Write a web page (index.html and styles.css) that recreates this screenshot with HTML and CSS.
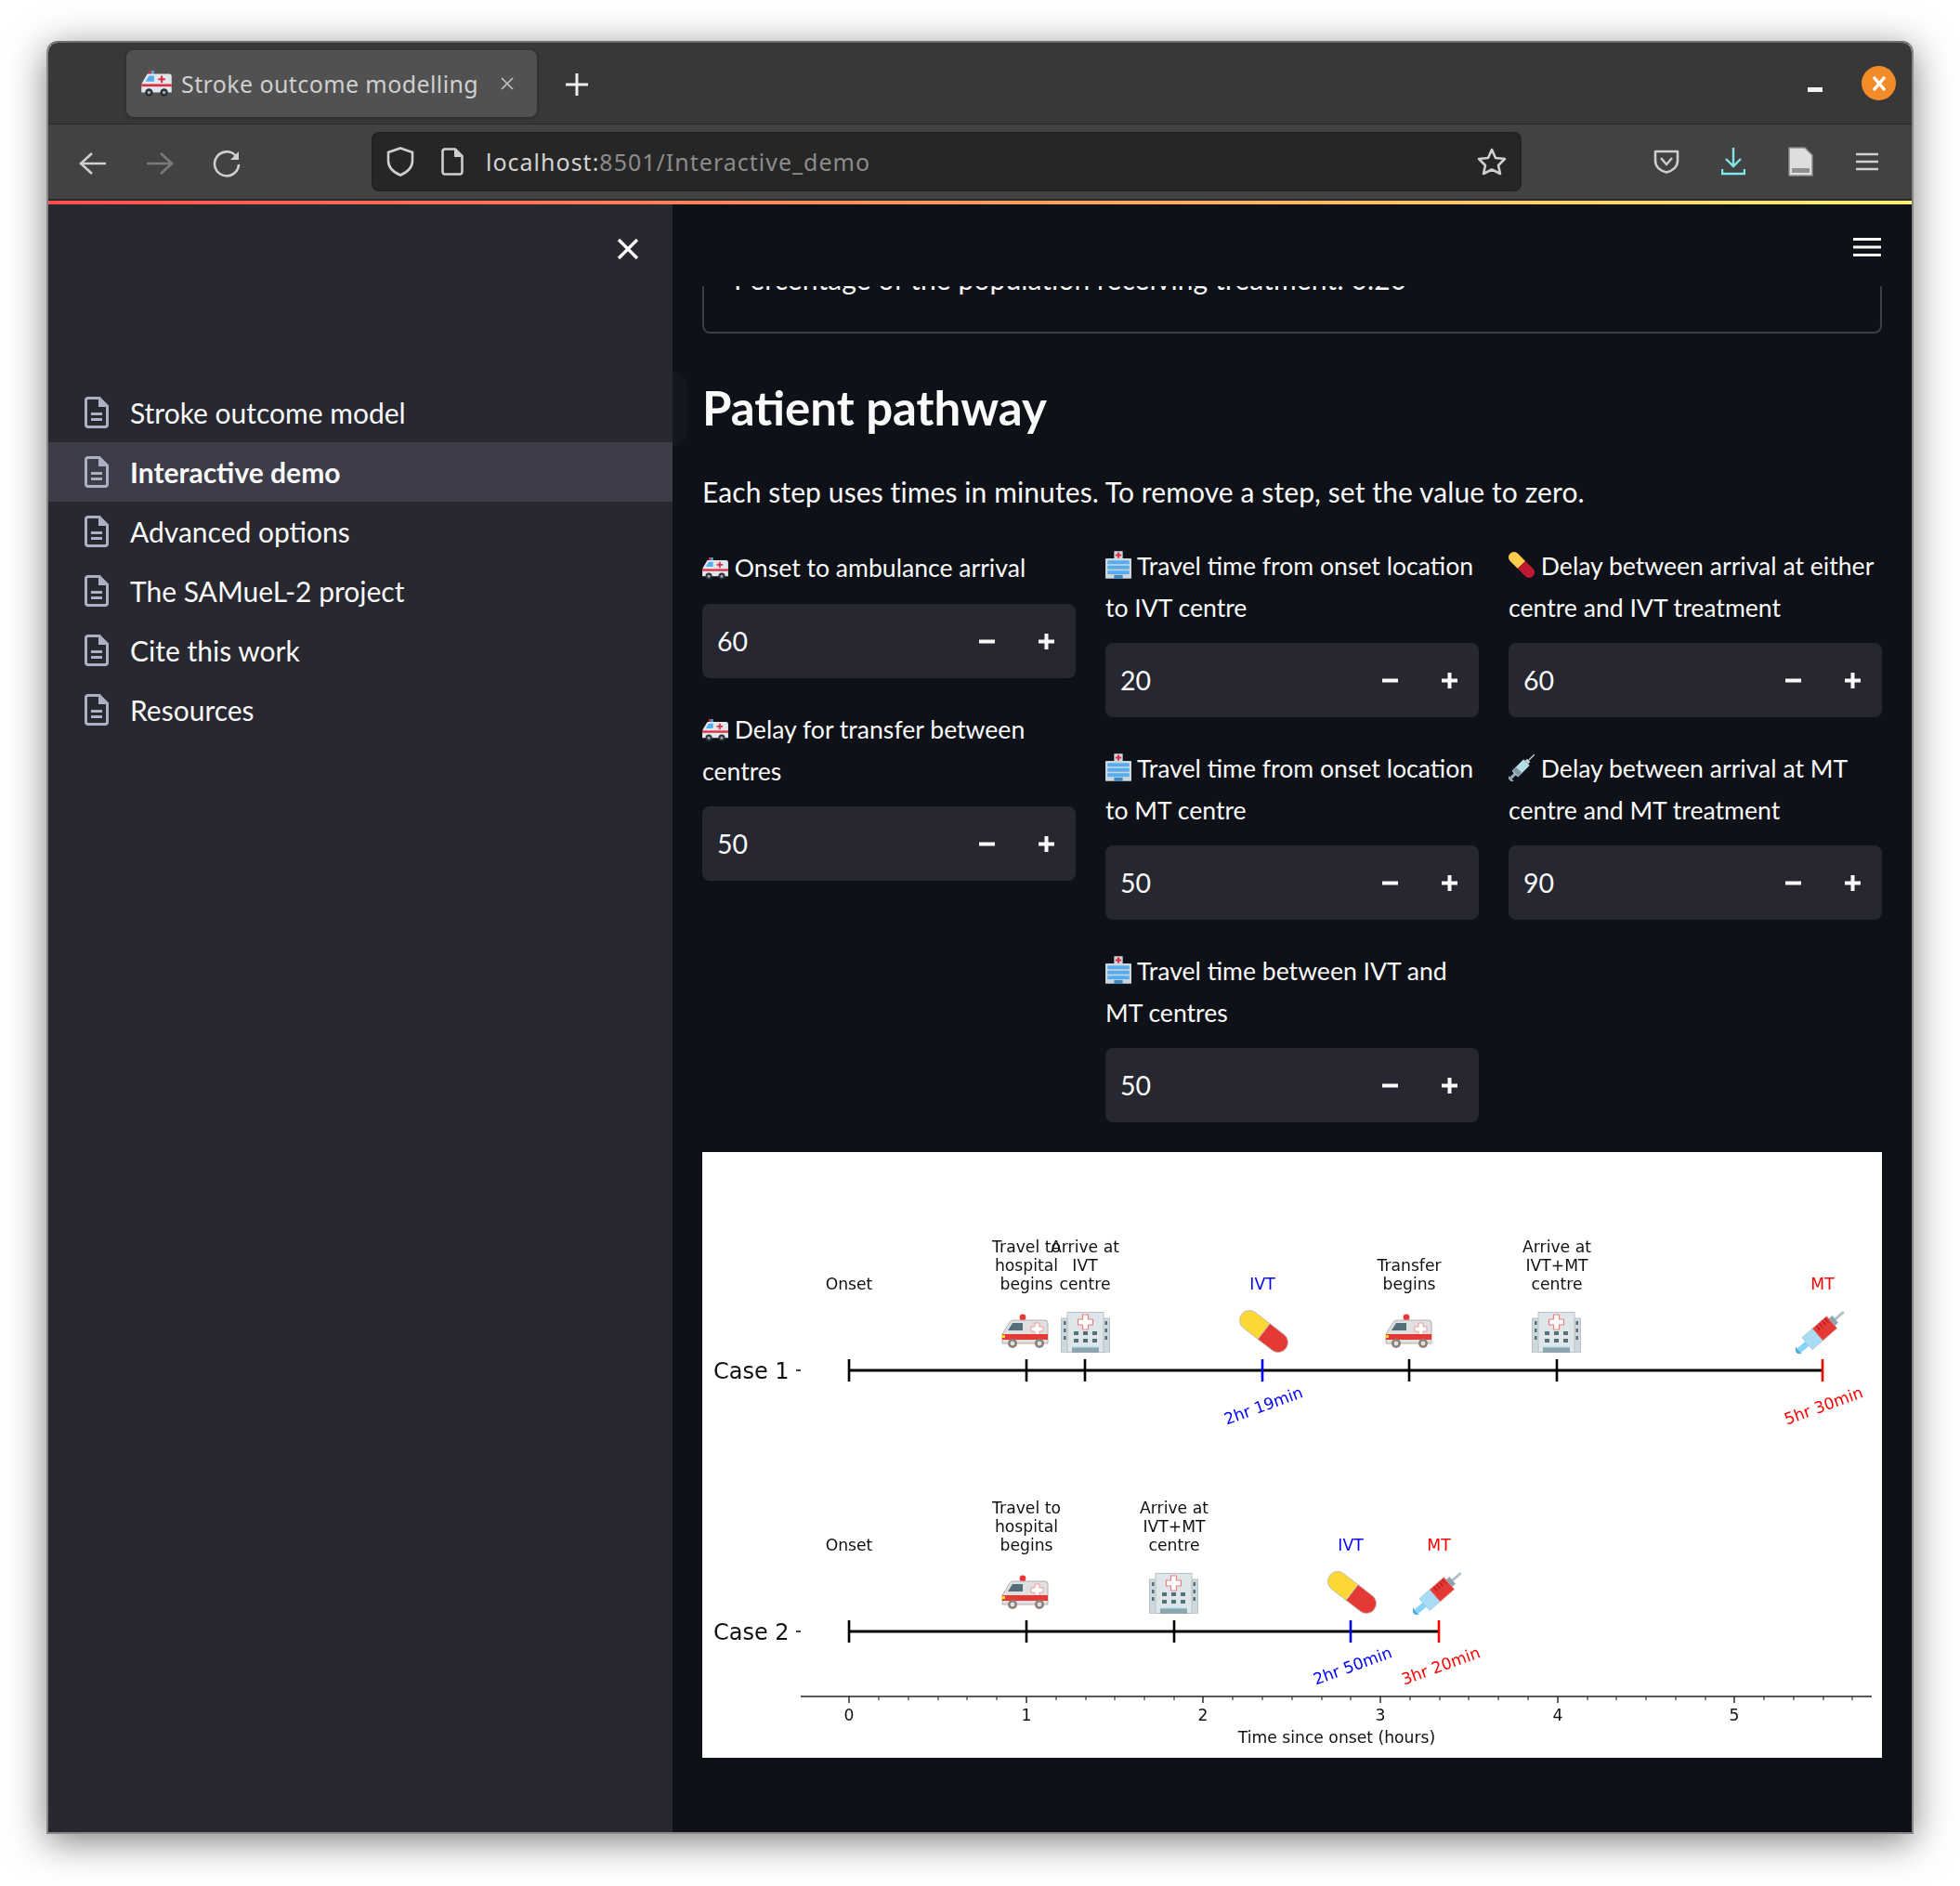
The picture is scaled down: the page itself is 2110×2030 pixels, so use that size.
FILE: index.html
```html
<!DOCTYPE html>
<html>
<head>
    <meta charset="UTF-8">
    <title>Stroke outcome modelling</title>
    <link rel="stylesheet" href="styles.css">
</head>
<body>
    <svg class="defs" width="0" height="0">
        <symbol id="tw-ambulance" viewBox="0 0 36 31">
            <rect x="9" y="0" width="3" height="4" fill="#dd2e44"/>
            <rect x="12" y="0" width="3" height="4" fill="#55acee"/>
            <path d="M1 14 L7 4 H33 a3 3 0 0 1 3 3 V26 H0 V17z" fill="#e1e8ed"/>
            <path d="M5 13 L9 6 H15 V13z" fill="#55acee"/>
            <path d="M23 6 h2.4 v3 h3 v2.4 h-3 v3 h-2.4 v-3 h-3 v-2.4 h3z" fill="#dd2e44"/>
            <rect x="0" y="16" width="36" height="3" fill="#dd2e44"/>
            <circle cx="9" cy="26" r="4.6" fill="#292f33"/>
            <circle cx="9" cy="26" r="2" fill="#99aab5"/>
            <circle cx="27" cy="26" r="4.6" fill="#292f33"/>
            <circle cx="27" cy="26" r="2" fill="#99aab5"/>
        </symbol>
        <symbol id="tw-hospital" viewBox="0 0 36 38">
            <rect x="12" y="0" width="12" height="12" fill="#ccd6dd"/>
            <path d="M16.6 1.5 h2.8 v2.6 h2.6 v2.8 h-2.6 v2.6 h-2.8 v-2.6 h-2.6 v-2.8 h2.6z" fill="#dd2e44"/>
            <rect x="0" y="10" width="36" height="28" rx="1" fill="#ccd6dd"/>
            <rect x="3" y="13" width="30" height="5" fill="#55acee"/>
            <rect x="3" y="20" width="30" height="5" fill="#55acee"/>
            <rect x="3" y="27" width="30" height="5" fill="#55acee"/>
            <rect x="12" y="33" width="12" height="5" fill="#3b88c3"/>
        </symbol>
        <symbol id="tw-pill" viewBox="0 0 36 36">
            <g transform="rotate(45 18 18)">
                <path d="M18 10.5 H3.15 a7.5 7.5 0 0 0 0 15 H18z" fill="#ffcc4d"/>
                <path d="M18 10.5 H32.85 a7.5 7.5 0 0 1 0 15 H18z" fill="#be1931"/>
            </g>
        </symbol>
        <symbol id="tw-syringe" viewBox="0 0 36 36">
            <g transform="rotate(-45 18 18)">
                <rect x="-6" y="11" width="3" height="14" fill="#99aab5"/>
                <rect x="-3" y="16" width="9" height="4" fill="#99aab5"/>
                <rect x="5" y="12" width="23" height="12" rx="1" fill="#b6dde8"/>
                <rect x="6" y="12" width="7" height="12" fill="#8899a6"/>
                <rect x="28" y="15" width="4" height="6" fill="#ccd6dd"/>
                <rect x="32" y="17.2" width="11" height="1.6" fill="#ccd6dd"/>
            </g>
        </symbol>

        <symbol id="no-ambulance" viewBox="0 0 53 37">
            <circle cx="24" cy="4" r="3.4" fill="#e53935"/>
            <path d="M2 22 L10 9 Q11 7 14 7 H48 q3 0 3 3 V32 H2z" fill="#e0e0e0" stroke="#b0b0b0" stroke-width="1"/>
            <path d="M8 18 L13 10 H24 V18z" fill="#546e7a"/>
            <path d="M37 10 h5 v4 h4 v5 h-4 v4 h-5 v-4 h-4 v-5 h4z" fill="#fff" stroke="#ef9a9a" stroke-width="1"/>
            <rect x="2" y="22" width="49" height="6" fill="#e53935"/>
            <rect x="1" y="23" width="4" height="3" fill="#fdd835"/>
            <circle cx="13" cy="32" r="5" fill="#8d7f7a"/>
            <circle cx="13" cy="32" r="2.4" fill="#e0e0e0"/>
            <circle cx="42" cy="32" r="5" fill="#8d7f7a"/>
            <circle cx="42" cy="32" r="2.4" fill="#e0e0e0"/>
        </symbol>
        <symbol id="no-hospital" viewBox="0 0 53 44">
            <rect x="0.5" y="7" width="52" height="37" fill="#cfd8dc" stroke="#b8c2c6"/>
            <rect x="7" y="0.5" width="39" height="43" fill="#dfe6e9" stroke="#b8c2c6"/>
            <path d="M23.5 3 h6 v5 h5 v6 h-5 v5 h-6 v-5 h-5 v-6 h5z" fill="#fff" stroke="#ef7f7f" stroke-width="1.2"/>
            <g fill="#546e7a">
                <rect x="14" y="21" width="5" height="4"/><rect x="24" y="21" width="5" height="4"/><rect x="34" y="21" width="5" height="4"/>
                <rect x="14" y="29" width="5" height="4"/><rect x="24" y="29" width="5" height="4"/><rect x="34" y="29" width="5" height="4"/>
                <rect x="3" y="10" width="2.5" height="4"/><rect x="3" y="18" width="2.5" height="4"/><rect x="3" y="26" width="2.5" height="4"/>
                <rect x="47.5" y="10" width="2.5" height="4"/><rect x="47.5" y="18" width="2.5" height="4"/><rect x="47.5" y="26" width="2.5" height="4"/>
            </g>
            <rect x="12" y="37" width="29" height="7" fill="#90a4ae"/>
            <rect x="12" y="37" width="29" height="1.4" fill="#b2ebf2"/>
        </symbol>
        <symbol id="no-pill" viewBox="0 0 53 46">
            <g transform="rotate(37.7 26.5 23)" stroke="#bdbdbd" stroke-width="0.8">
                <path d="M26.5 12.4 H46 a10.6 10.6 0 0 1 0 21.2 H26.5z" fill="#e53935"/>
                <path d="M26.5 12.4 H7 a10.6 10.6 0 0 0 0 21.2 H26.5z" fill="#fdd835"/>
            </g>
        </symbol>
        <symbol id="no-syringe" viewBox="0 0 53 46">
            <g transform="rotate(-41 26.5 23)">
                <rect x="-7" y="14" width="3.4" height="18" rx="1" fill="#4fa8d8"/>
                <rect x="-4" y="20" width="12" height="6" fill="#81d4fa"/>
                <rect x="8" y="14.5" width="15" height="17" fill="#a8dcf4" stroke="#9cc7da" stroke-width="0.8"/>
                <rect x="23" y="14.5" width="20" height="17" fill="#e53935" stroke="#d98080" stroke-width="0.8"/>
                <path d="M28 15 V21 M32 15 V21 M36 15 V21 M40 15 V21" stroke="#b71c1c" stroke-width="1.2"/>
                <rect x="43" y="18" width="5" height="10" fill="#90a4ae"/>
                <rect x="48" y="21.6" width="12" height="2.8" fill="#b0bec5"/>
            </g>
        </symbol>

        <symbol id="doc" viewBox="0 0 26 34">
            <path d="M3.5 1.5 H16 L24.5 10 V30 a2.5 2.5 0 0 1 -2.5 2.5 H4 a2.5 2.5 0 0 1 -2.5 -2.5 V4 a2.5 2.5 0 0 1 2 -2.5z" fill="none" stroke="currentColor" stroke-width="3"/>
            <path d="M15 2 L24 11 H15z" fill="currentColor"/>
            <rect x="7" y="17" width="12" height="3" fill="currentColor"/>
            <rect x="7" y="23" width="12" height="3" fill="currentColor"/>
        </symbol>
        <symbol id="minus" viewBox="0 0 17 17"><rect x="0" y="6.5" width="17" height="4" fill="currentColor"/></symbol>
        <symbol id="plus" viewBox="0 0 17 17"><path d="M6.5 0 h4 v6.5 h6.5 v4 h-6.5 v6.5 h-4 v-6.5 h-6.5 v-4 h6.5z" fill="currentColor"/></symbol>
    </svg>

    <div class="window">
        <div class="tabstrip">
            <div class="tab">
                <svg class="tab-icon"><use href="#tw-ambulance"/></svg>
                <span class="tab-title">Stroke outcome modelling</span>
                <svg class="tab-close" viewBox="0 0 14 14"><path d="M1 1 L13 13 M13 1 L1 13" stroke="currentColor" stroke-width="1.6"/></svg>
            </div>
            <svg class="new-tab" viewBox="0 0 24 24"><path d="M12 0 V24 M0 12 H24" stroke="currentColor" stroke-width="3"/></svg>
            <div class="win-controls">
                <span class="win-min"></span>
                <span class="win-close">
                    <svg viewBox="0 0 16 16"><path d="M2 1 L14 15 M14 1 L2 15" stroke="#fff" stroke-width="3.4"/></svg>
                </span>
            </div>
        </div>

        <div class="toolbar">
            <span class="tool-btn nudge">
                <svg width="30" height="26" viewBox="0 0 30 26"><path d="M14 2 L2 13 L14 24 M2 13 H29" fill="none" stroke="currentColor" stroke-width="2.6"/></svg>
            </span>
            <span class="tool-btn nudge dim">
                <svg width="30" height="26" viewBox="0 0 30 26"><path d="M16 2 L28 13 L16 24 M28 13 H1" fill="none" stroke="currentColor" stroke-width="2.6"/></svg>
            </span>
            <span class="tool-btn nudge">
                <svg width="30" height="30" viewBox="0 0 30 30"><path d="M25 7 A13 13 0 1 0 28 16" fill="none" stroke="currentColor" stroke-width="2.6"/><path d="M28 2 V11 H19z" fill="currentColor"/></svg>
            </span>
            <div class="urlbar">
                <svg class="url-shield" width="30" height="32" viewBox="0 0 30 32"><path d="M15 1.5 L28 6 V15 C28 23 21 28 15 30.5 C9 28 2 23 2 15 V6z" fill="none" stroke="currentColor" stroke-width="2.6"/></svg>
                <svg class="url-doc" width="24" height="30" viewBox="0 0 24 30"><path d="M3 1.5 H15 L22.5 9 V26 a2.5 2.5 0 0 1 -2.5 2.5 H4 a2.5 2.5 0 0 1 -2.5 -2.5 V3z" fill="none" stroke="currentColor" stroke-width="2.6"/><path d="M14 2 L22 10 H14z" fill="currentColor"/></svg>
                <span class="url-text">localhost:<span class="url-rest">8501/Interactive_demo</span></span>
                <svg class="url-star" width="32" height="30" viewBox="0 0 32 30"><path d="M16 2 L20 11 L30 12 L23 19 L25 28 L16 23.5 L7 28 L9 19 L2 12 L12 11z" fill="none" stroke="currentColor" stroke-width="2.6" stroke-linejoin="round"/></svg>
            </div>
            <div class="tool-right">
                <span class="tool-btn">
                    <svg width="28" height="26" viewBox="0 0 28 26"><path d="M2 2 H26 V12 C26 19 20 23 14 24.5 C8 23 2 19 2 12z" fill="none" stroke="currentColor" stroke-width="2.6" stroke-linejoin="round"/><path d="M8 9 L14 16 L20 9" fill="none" stroke="currentColor" stroke-width="2.4"/></svg>
                </span>
                <span class="tool-btn cyan">
                    <svg width="26" height="30" viewBox="0 0 26 30"><path d="M13 0 V20 M5 12 L13 20 L21 12 M1 23 V28 H25 V23" fill="none" stroke="currentColor" stroke-width="2.4"/></svg>
                </span>
                <span class="tool-btn">
                    <svg width="27" height="32" viewBox="0 0 27 32"><path d="M1 1 H18 L26 9 V31 H1z" fill="#dedede" stroke="#8a8a8a" stroke-width="1.5"/><rect x="4" y="23" width="19" height="5" fill="#8f8f8f"/></svg>
                </span>
                <span class="tool-btn">
                    <svg width="24" height="20" viewBox="0 0 24 20"><path d="M0 2 H24 M0 10 H24 M0 18 H24" stroke="currentColor" stroke-width="2.6"/></svg>
                </span>
            </div>
        </div>
        <div class="accent"></div>

        <div class="app">
            <aside class="sidebar">
                <div class="sidebar-top">
                    <svg width="24" height="24" viewBox="0 0 24 24"><path d="M2 2 L22 22 M22 2 L2 22" stroke="currentColor" stroke-width="3.4"/></svg>
                </div>
                <ul class="nav">
                    <li><svg class="nav-icon"><use href="#doc"/></svg>Stroke outcome model</li>
                    <li class="current"><svg class="nav-icon"><use href="#doc"/></svg>Interactive demo</li>
                    <li><svg class="nav-icon"><use href="#doc"/></svg>Advanced options</li>
                    <li><svg class="nav-icon"><use href="#doc"/></svg>The SAMueL-2 project</li>
                    <li><svg class="nav-icon"><use href="#doc"/></svg>Cite this work</li>
                    <li><svg class="nav-icon"><use href="#doc"/></svg>Resources</li>
                </ul>
                <span class="sidebar-glow"></span>
            </aside>

            <main class="main">
                <div class="main-header">
                    <svg width="30" height="20" viewBox="0 0 30 20"><path d="M0 1.5 H30 M0 10 H30 M0 18.5 H30" stroke="currentColor" stroke-width="3.2"/></svg>
                </div>
                <div class="content">
                    <div class="info-box">Percentage of the population receiving treatment: 0.20</div>
                    <h2>Patient pathway</h2>
                    <p class="intro">Each step uses times in minutes. To remove a step, set the value to zero.</p>

                    <div class="columns">
                        <div class="column">
                            <div class="field">
                                <label class="one-line"><svg class="emoji"><use href="#tw-ambulance"/></svg> Onset to ambulance arrival</label>
                                <div class="stepper"><span class="value">60</span><span class="step"><svg><use href="#minus"/></svg></span><span class="step"><svg><use href="#plus"/></svg></span></div>
                            </div>
                            <div class="field">
                                <label><svg class="emoji"><use href="#tw-ambulance"/></svg> Delay for transfer between centres</label>
                                <div class="stepper"><span class="value">50</span><span class="step"><svg><use href="#minus"/></svg></span><span class="step"><svg><use href="#plus"/></svg></span></div>
                            </div>
                        </div>
                        <div class="column">
                            <div class="field">
                                <label><svg class="emoji tall"><use href="#tw-hospital"/></svg> Travel time from onset location to IVT centre</label>
                                <div class="stepper"><span class="value">20</span><span class="step"><svg><use href="#minus"/></svg></span><span class="step"><svg><use href="#plus"/></svg></span></div>
                            </div>
                            <div class="field">
                                <label><svg class="emoji tall"><use href="#tw-hospital"/></svg> Travel time from onset location to MT centre</label>
                                <div class="stepper"><span class="value">50</span><span class="step"><svg><use href="#minus"/></svg></span><span class="step"><svg><use href="#plus"/></svg></span></div>
                            </div>
                            <div class="field">
                                <label><svg class="emoji tall"><use href="#tw-hospital"/></svg> Travel time between IVT and MT centres</label>
                                <div class="stepper"><span class="value">50</span><span class="step"><svg><use href="#minus"/></svg></span><span class="step"><svg><use href="#plus"/></svg></span></div>
                            </div>
                        </div>
                        <div class="column">
                            <div class="field">
                                <label><svg class="emoji tall"><use href="#tw-pill"/></svg> Delay between arrival at either centre and IVT treatment</label>
                                <div class="stepper"><span class="value">60</span><span class="step"><svg><use href="#minus"/></svg></span><span class="step"><svg><use href="#plus"/></svg></span></div>
                            </div>
                            <div class="field">
                                <label><svg class="emoji tall"><use href="#tw-syringe"/></svg> Delay between arrival at MT centre and MT treatment</label>
                                <div class="stepper"><span class="value">90</span><span class="step"><svg><use href="#minus"/></svg></span><span class="step"><svg><use href="#plus"/></svg></span></div>
                            </div>
                        </div>
                    </div>

                    <!-- coordinates in the chart are page pixels, so the viewBox starts at the image corner -->
                    <svg class="chart" viewBox="756 1240 1270 652" width="1270" height="652">
                        <g class="chart-text">
                            <text x="914" y="1388">Onset</text>
                            <text x="1105" y="1348">Travel to</text>
                            <text x="1105" y="1368">hospital</text>
                            <text x="1105" y="1388">begins</text>
                            <text x="1168" y="1348">Arrive at</text>
                            <text x="1168" y="1368">IVT</text>
                            <text x="1168" y="1388">centre</text>
                            <text x="1359" y="1388" class="blue">IVT</text>
                            <text x="1517" y="1368">Transfer</text>
                            <text x="1517" y="1388">begins</text>
                            <text x="1676" y="1348">Arrive at</text>
                            <text x="1676" y="1368">IVT+MT</text>
                            <text x="1676" y="1388">centre</text>
                            <text x="1962" y="1388" class="red">MT</text>

                            <text x="914" y="1669">Onset</text>
                            <text x="1105" y="1629">Travel to</text>
                            <text x="1105" y="1649">hospital</text>
                            <text x="1105" y="1669">begins</text>
                            <text x="1264" y="1629">Arrive at</text>
                            <text x="1264" y="1649">IVT+MT</text>
                            <text x="1264" y="1669">centre</text>
                            <text x="1454" y="1669" class="blue">IVT</text>
                            <text x="1549" y="1669" class="red">MT</text>

                            <text x="1360" y="1519" class="blue" transform="rotate(-20 1360 1513)">2hr 19min</text>
                            <text x="1963" y="1519" class="red" transform="rotate(-20 1963 1513)">5hr 30min</text>
                            <text x="1456" y="1799" class="blue" transform="rotate(-20 1456 1793)">2hr 50min</text>
                            <text x="1551" y="1799" class="red" transform="rotate(-20 1551 1793)">3hr 20min</text>

                            <text x="914" y="1852">0</text>
                            <text x="1105" y="1852">1</text>
                            <text x="1295" y="1852">2</text>
                            <text x="1486" y="1852">3</text>
                            <text x="1677" y="1852">4</text>
                            <text x="1867" y="1852">5</text>
                            <text x="1439" y="1876">Time since onset (hours)</text>
                        </g>
                        <text x="768" y="1484" class="case-label">Case 1</text>
                        <text x="768" y="1765" class="case-label">Case 2</text>

                        <g class="chart-lines">
                            <path d="M857 1475 H862 M857 1756 H862" stroke="#444" stroke-width="2"/>
                            <path d="M914 1475 H1962 M914 1756 H1549" stroke="#000" stroke-width="3"/>
                            <path d="M914 1463 V1487 M1105 1463 V1487 M1168 1463 V1487 M1517 1463 V1487 M1676 1463 V1487" stroke="#000" stroke-width="2.6"/>
                            <path d="M914 1744 V1768 M1105 1744 V1768 M1264 1744 V1768" stroke="#000" stroke-width="2.6"/>
                            <path d="M1359 1463 V1487 M1454 1744 V1768" stroke="#00f" stroke-width="2.6"/>
                            <path d="M1962 1463 V1487 M1549 1744 V1768" stroke="#f00" stroke-width="2.6"/>
                            <path d="M862 1826 H2015" stroke="#222" stroke-width="1.4"/>
                            <path d="M914 1826 V1833 M1105 1826 V1833 M1295 1826 V1833 M1486 1826 V1833 M1677 1826 V1833 M1867 1826 V1833" stroke="#222" stroke-width="1.4"/>
                            <path class="minor" d="M946 1826 v4 M978 1826 v4 M1010 1826 v4 M1041 1826 v4 M1073 1826 v4 M1137 1826 v4 M1169 1826 v4 M1200 1826 v4 M1232 1826 v4 M1264 1826 v4 M1327 1826 v4 M1359 1826 v4 M1391 1826 v4 M1423 1826 v4 M1454 1826 v4 M1518 1826 v4 M1550 1826 v4 M1581 1826 v4 M1613 1826 v4 M1645 1826 v4 M1709 1826 v4 M1740 1826 v4 M1772 1826 v4 M1804 1826 v4 M1836 1826 v4 M1899 1826 v4 M1931 1826 v4 M1963 1826 v4 M1994 1826 v4" stroke="#333" stroke-width="1.2"/>
                        </g>

                        <g class="chart-icons">
                            <use href="#no-ambulance" x="1077" y="1414" width="53" height="37"/>
                            <use href="#no-hospital" x="1142" y="1412" width="53" height="44"/>
                            <use href="#no-pill" x="1334" y="1410" width="53" height="46"/>
                            <use href="#no-ambulance" x="1490" y="1414" width="53" height="37"/>
                            <use href="#no-hospital" x="1649" y="1412" width="53" height="44"/>
                            <use href="#no-syringe" x="1933" y="1411" width="53" height="46"/>

                            <use href="#no-ambulance" x="1077" y="1695" width="53" height="37"/>
                            <use href="#no-hospital" x="1237" y="1693" width="53" height="44"/>
                            <use href="#no-pill" x="1429" y="1691" width="53" height="46"/>
                            <use href="#no-syringe" x="1521" y="1692" width="53" height="46"/>
                        </g>
                    </svg>
                </div>
            </main>
        </div>
    </div>
</body>
</html>
```

FILE: styles.css
```css
* {
    box-sizing: border-box;
}
html, body {
    margin: 0;
    padding: 0;
    background-color: #ffffff;
}
body {
    width: 2110px;
    height: 2030px;
    overflow: hidden;
    padding: 44px 50px 56px;
    font-family: Lato, "Noto Sans", sans-serif;
    color: #fafafa;
}
.defs {
    position: absolute;
}
.window {
    display: flex;
    flex-direction: column;
    height: 1930px;
    border: 2px solid #878787;
    border-top-color: #6f6f6f;
    border-radius: 12px 12px 0 0;
    box-shadow: 0 8px 40px rgba(0, 0, 0, 0.5);
    overflow: hidden;
}

/* browser chrome */
.tabstrip {
    display: flex;
    align-items: flex-start;
    flex: none;
    height: 88px;
    padding: 8px 0 0 84px;
    background-color: #383838;
    border-bottom: 1px solid #2b2b2b;
    font-family: "Noto Sans", sans-serif;
}
.tab {
    display: flex;
    align-items: center;
    width: 442px;
    height: 72px;
    padding-left: 16px;
    background-color: #515151;
    border-radius: 8px;
    box-shadow: 0 1px 4px rgba(0, 0, 0, 0.3);
}
.tab-icon {
    width: 33px;
    height: 28px;
    flex: none;
}
.tab-title {
    margin-left: 10px;
    font-size: 25px;
    letter-spacing: 0.4px;
    color: #cfcfcf;
    white-space: nowrap;
}
.tab-close {
    width: 14px;
    height: 14px;
    margin-left: auto;
    margin-right: 25px;
    color: #c4c4c4;
}
.new-tab {
    width: 24px;
    height: 24px;
    margin: 25px 0 0 31px;
    color: #f0f0f0;
}
.win-controls {
    display: flex;
    align-items: flex-start;
    margin-left: auto;
    margin-right: 17px;
}
.win-min {
    width: 16px;
    height: 5px;
    margin: 40px 42px 0 0;
    background-color: #f2f2f2;
}
.win-close {
    display: flex;
    align-items: center;
    justify-content: center;
    width: 37px;
    height: 37px;
    margin-top: 17px;
    border-radius: 50%;
    background-color: #f28c28;
}
.win-close svg {
    width: 16px;
    height: 16px;
}
.toolbar {
    display: flex;
    align-items: center;
    flex: none;
    height: 82px;
    padding-left: 12px;
    background-color: #424242;
    border-bottom: 2px solid #2a2a2a;
    color: #cfcfcf;
}
.tool-btn {
    display: flex;
    align-items: center;
    justify-content: center;
    width: 72px;
    height: 72px;
}
.tool-btn.nudge {
    padding-top: 3px;
}
.tool-btn.dim {
    color: #7a7a7a;
}
.tool-btn.cyan {
    color: #7fe7e8;
}
.urlbar {
    display: flex;
    align-items: center;
    width: 1238px;
    height: 64px;
    margin-left: 120px;
    padding: 0 14px;
    background-color: #262626;
    border: 2px solid #222222;
    border-radius: 8px;
    font-family: "Noto Sans", sans-serif;
}
.url-doc {
    margin-left: 29px;
}
.url-text {
    margin-left: 24px;
    font-size: 25px;
    letter-spacing: 1px;
    color: #d4d4d4;
    white-space: nowrap;
}
.url-rest {
    color: #8c8c8c;
}
.url-star {
    margin-left: auto;
}
.tool-right {
    display: flex;
    margin-left: 120px;
}
.accent {
    flex: none;
    height: 4px;
    background: linear-gradient(to right, #ff4f4f 0%, #ff9a5c 50%, #fff176 100%);
}

/* app */
.app {
    display: flex;
    flex: 1;
    min-height: 0;
}
.sidebar {
    position: relative;
    flex: none;
    width: 672px;
    background-color: #282831;
}
.sidebar-top {
    display: flex;
    justify-content: flex-end;
    height: 192px;
    padding: 36px 36px 0 0;
}
.sidebar-top svg {
    display: block;
}
.sidebar-glow {
    position: absolute;
    top: 180px;
    right: -16px;
    width: 16px;
    height: 80px;
    border-radius: 0 40px 40px 0;
    background-color: #141720;
}
.nav {
    margin: 0;
    padding: 0;
    list-style: none;
}
.nav li {
    display: flex;
    align-items: center;
    height: 64px;
    padding-left: 39px;
    font-size: 30px;
}
.nav li.current {
    background-color: #3c3d49;
    font-weight: 700;
}
.nav-icon {
    flex: none;
    width: 26px;
    height: 34px;
    margin-right: 23px;
    color: #acb0c4;
}
.main {
    display: flex;
    flex-direction: column;
    flex: 1;
    min-width: 0;
    background-color: #0e1117;
}
.main-header {
    display: flex;
    justify-content: flex-end;
    flex: none;
    height: 88px;
    padding: 36px 33px 0 0;
}
.main-header svg {
    display: block;
}
.content {
    flex: 1;
    min-height: 0;
    padding: 0 32px;
    overflow: hidden;
}
.info-box {
    height: 101px;
    margin-top: -50px;
    padding: 20px 32px 0;
    border: 2px solid #3d3f46;
    border-radius: 8px;
    font-size: 30px;
    letter-spacing: 0.1px;
    line-height: 40px;
}
h2 {
    margin: 48px 0 0;
    font-size: 51px;
    line-height: 64px;
    font-weight: 700;
}
.intro {
    margin: 34px 0 0;
    font-size: 30px;
    letter-spacing: 0.1px;
    line-height: 48px;
}
.columns {
    display: grid;
    grid-template-columns: repeat(3, 1fr);
    gap: 32px;
    margin-top: 33px;
    align-items: start;
}
.field {
    margin-bottom: 32px;
}
.column .field:last-child {
    margin-bottom: 0;
}
.field label {
    display: block;
    margin-bottom: 15px;
    padding-top: 1px;
    font-size: 26.6px;
    line-height: 45px;
}
.field label.one-line {
    line-height: 48px;
}
.emoji {
    width: 28px;
    height: 24px;
    vertical-align: -3px;
}
.emoji.tall {
    height: 30px;
    vertical-align: -4px;
}
.stepper {
    display: flex;
    align-items: center;
    height: 80px;
    background-color: #262730;
    border-radius: 8px;
}
.value {
    flex: 1;
    padding-left: 16px;
    font-size: 28.5px;
}
.step {
    display: flex;
    align-items: center;
    justify-content: center;
    width: 64px;
    height: 80px;
}
.step svg {
    width: 17px;
    height: 17px;
}

/* chart */
.chart {
    display: block;
    margin-top: 32px;
    background-color: #ffffff;
    filter: blur(0.35px);
}
.chart-text text {
    font-family: "DejaVu Sans", sans-serif;
    font-size: 17.2px;
    text-anchor: middle;
    fill: #111111;
}
.chart-text text.blue {
    fill: #0000ff;
}
.chart-text text.red {
    fill: #ff0000;
}
.case-label {
    font-family: "DejaVu Sans", sans-serif;
    font-size: 24px;
    fill: #111111;
}
```
